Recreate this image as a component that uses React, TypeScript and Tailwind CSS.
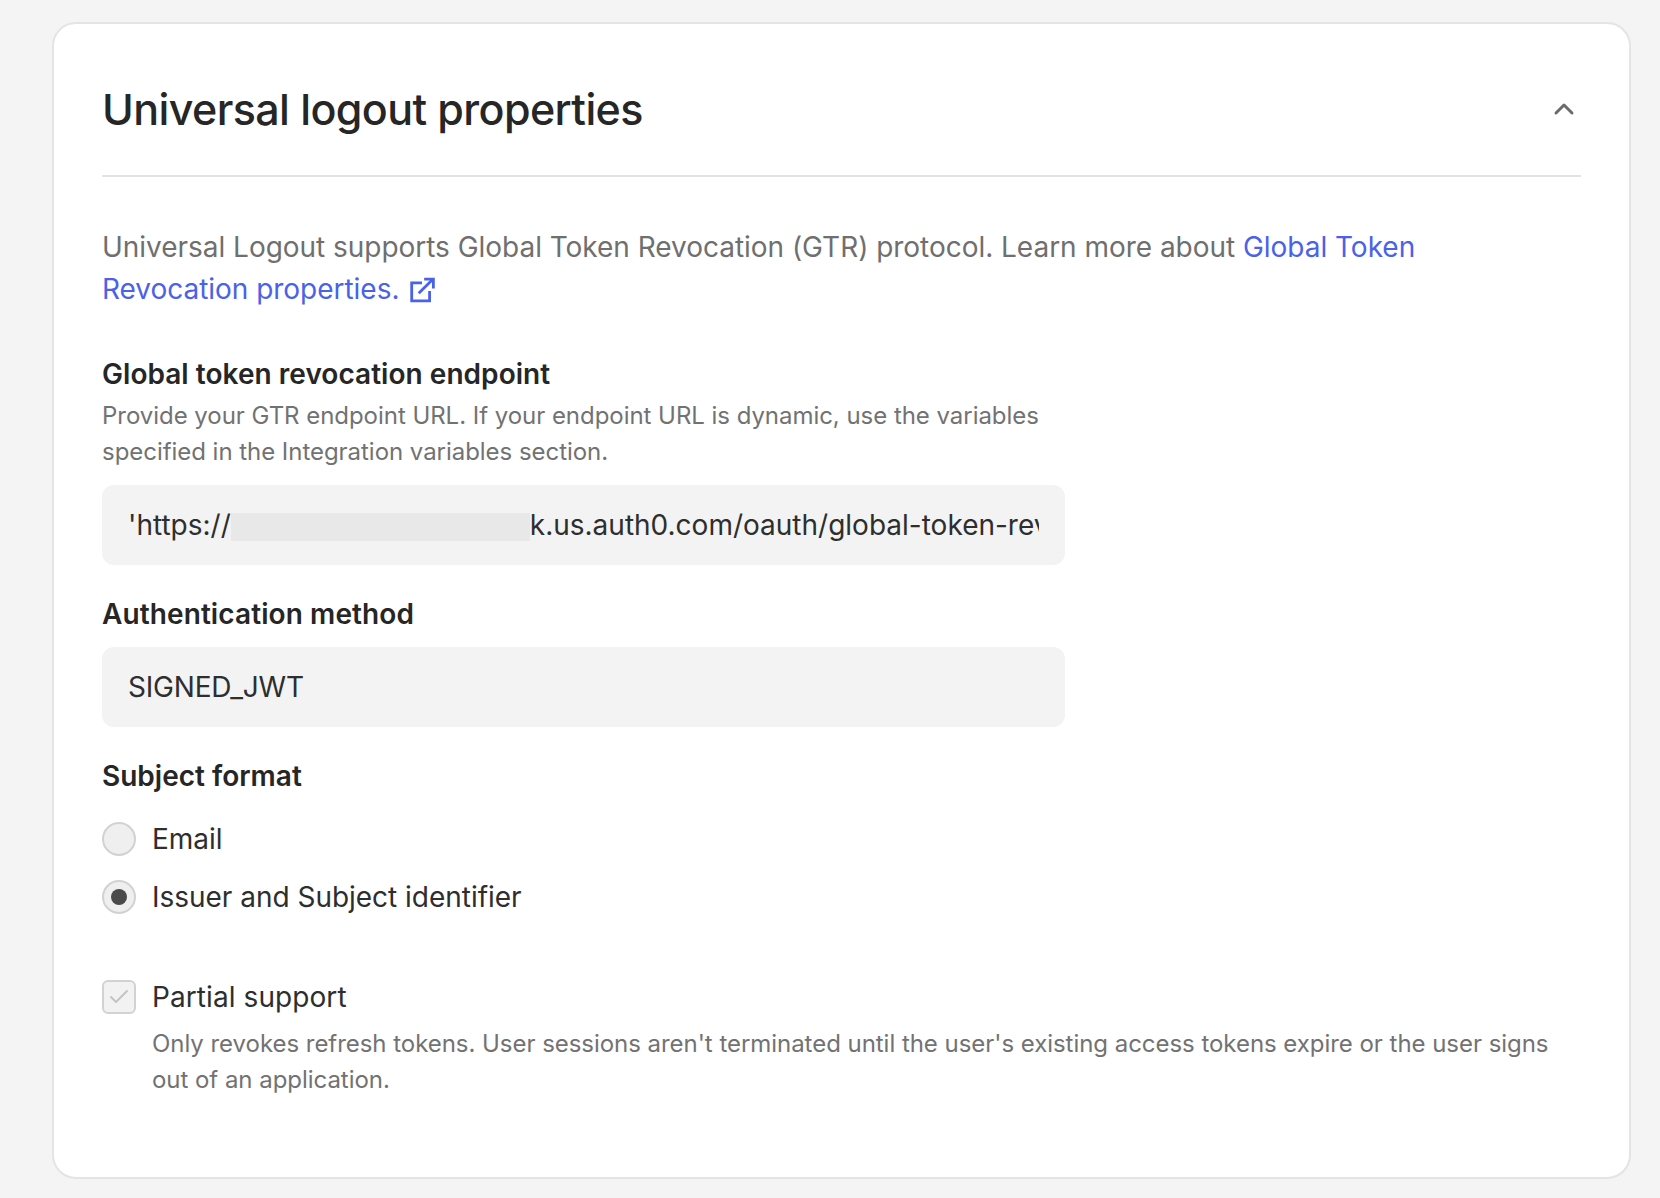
import { ChevronUp, Check } from "lucide-react";

function Radio({ checked, label }: { checked?: boolean; label: string }) {
  return (
    <div className="flex h-[34px] items-center gap-4">
      <span className="flex h-[34px] w-[34px] items-center justify-center rounded-full border-2 border-[#d2d2d2] bg-[#efefef]">
        {checked && <span className="h-4 w-4 rounded-full bg-[#4a4a4a]" />}
      </span>
      <span className="text-[28px] leading-[34px] tracking-[-0.02px] text-[#2e2e2e]">{label}</span>
    </div>
  );
}

export default function App() {
  return (
    <div className="h-[1198px] overflow-hidden bg-[#f4f4f4] pl-[52px] pr-[29px] pt-[22px] font-[Inter,sans-serif]">
      <div className="h-[1157px] rounded-[24px] border-2 border-[#e4e4e4] bg-white px-[48px]">
        <div className="flex h-[153px] items-center justify-between border-b-2 border-[#e2e2e2] pt-[18px]">
          <h2 className="text-[43px] leading-[52px] font-medium tracking-[-0.6px] text-[#262626]">
            Universal logout properties
          </h2>
          <ChevronUp className="mr-[1px] h-8 w-8 text-[#6b6b6b]" strokeWidth={2.2} />
        </div>

        <p className="mt-[49px] text-[28px] leading-[42px] tracking-[-0.03px] text-[#6f6f6f]">
          Universal Logout supports Global Token Revocation (GTR) protocol. Learn more about{" "}
          <a className="text-[#4a62e8]">
            Global Token
            <br />
            Revocation properties.
            <svg viewBox="0 0 24 24" fill="none" stroke="currentColor" strokeWidth="2.6" className="ml-[10px] inline-block h-[26px] w-[26px] align-[-4px]">
              <path d="M12 5.5H2.5v16.5h16.5v-9" />
              <path d="M9 15 22 2" />
              <path d="M14 2h8.5v8.5" />
            </svg>
          </a>
        </p>

        <h3 className="mt-[43px] text-[28px] leading-[42px] font-semibold tracking-[0.04px] text-[#262626]">
          Global token revocation endpoint
        </h3>
        <p className="mt-[3px] text-[24px] leading-[36px] tracking-[-0.04px] text-[#727272]">
          Provide your GTR endpoint URL. If your endpoint URL is dynamic, use the variables
          <br />
          specified in the Integration variables section.
        </p>
        <div className="mt-[15px] flex h-[80px] w-[963px] items-center rounded-[12px] bg-[#f3f3f3] px-[26px]">
          <div className="overflow-hidden whitespace-nowrap text-[28px] leading-[34px] text-[#2e2e2e]">
            'https://
            <span className="inline-block h-[28px] w-[299px] bg-[#e8e8e8] align-[-6px]" />
            k.us.auth0.com/oauth/global-token-revocation
          </div>
        </div>

        <h3 className="mt-[28px] text-[28px] leading-[42px] font-semibold tracking-[0.1px] text-[#262626]">
          Authentication method
        </h3>
        <div className="mt-[12px] flex h-[80px] w-[963px] items-center rounded-[12px] bg-[#f3f3f3] px-[26px] text-[28px] leading-[34px] tracking-[-0.2px] text-[#2e2e2e]">
          SIGNED_JWT
        </div>

        <h3 className="mt-[28px] text-[28px] leading-[42px] font-semibold text-[#262626]">
          Subject format
        </h3>
        <div className="mt-[25px] flex flex-col gap-6">
          <Radio label="Email" />
          <Radio checked label="Issuer and Subject identifier" />
        </div>

        <div className="mt-[66px] flex gap-4">
          <span className="flex h-[34px] w-[34px] shrink-0 items-center justify-center rounded-[6px] border-2 border-[#d2d2d2] bg-[#f2f2f2]">
            <Check className="h-6 w-6 text-[#c4c4c4]" strokeWidth={2} />
          </span>
          <div>
            <div className="text-[28px] leading-[34px] tracking-[0.08px] text-[#2e2e2e]">Partial support</div>
            <p className="mt-[12px] text-[24px] leading-[36px] tracking-[-0.04px] text-[#727272]">
              Only revokes refresh tokens. User sessions aren't terminated until the user's existing access tokens expire or the user signs out of an application.
            </p>
          </div>
        </div>
      </div>
    </div>
  );
}
